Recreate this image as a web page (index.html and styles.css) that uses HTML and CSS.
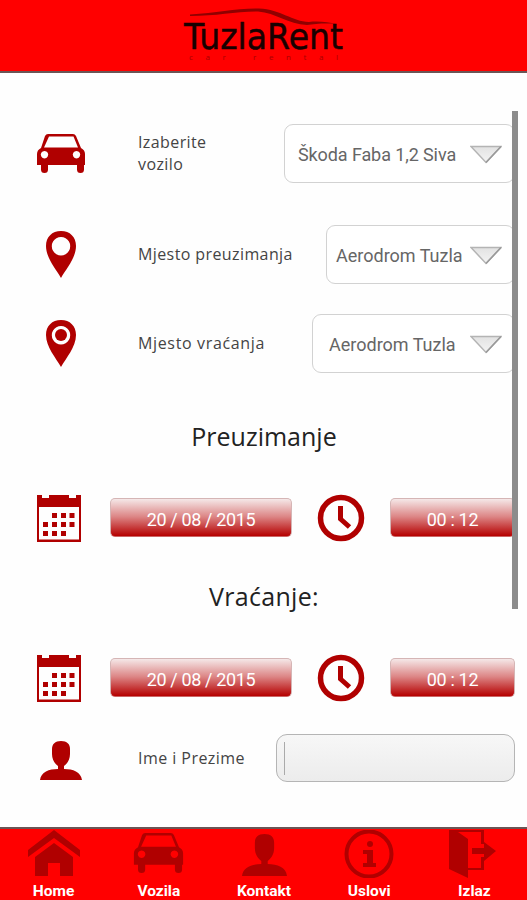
FILE: index.html
```html
<!DOCTYPE html>
<html lang="bs">
<head>
<meta charset="utf-8">
<title>TuzlaRent</title>
<link rel="stylesheet" href="styles.css">
</head>
<body>
<svg class="defs" width="0" height="0">
  <defs>
    <linearGradient id="arrow-fill" x1="0" y1="0" x2="0" y2="1"><stop offset="0" stop-color="#e2e2e2"/><stop offset="1" stop-color="#f4f4f4"/></linearGradient>
    <symbol id="car" viewBox="0 0 48 40">
      <path fill-rule="evenodd" d="M11 0h25q2 0 3 2l5 12q4 2 4 6v11h-1v4.500q0 3.500-3.500 3.500t-3.500-3.500V31H11v4.500q0 3.500-3.500 3.500T4 35.500V31H0V20q0-4 4-6L8 2q1-2 3-2zm1 2.500L7 13.500h34l-4.500-11zM7.500 17a3.700 3.700 0 1 0 .01 0zm32 0a3.700 3.700 0 1 0 .01 0z"/>
    </symbol>
    <symbol id="person" viewBox="0 0 42 39">
      <path d="M21 0c6 0 9 3 9 8v5c0 6-3 10-6 12v3c9 0 17 3 18 11H0c1-8 9-11 18-11v-3c-3-2-6-6-6-12V8c0-5 3-8 9-8z"/>
    </symbol>
    <symbol id="calendar" viewBox="0 0 44 47">
      <path fill-rule="evenodd" d="M0 0h5v3h7V0h20v3h7V0h5v47H0zM2 12v32.500h40V12z"/>
      <path d="M15 18h5v5h-5zm9 0h5v5h-5zm8.500 0h5v5h-5zM6 27h5v5H6zm9 0h5v5h-5zm9 0h5v5h-5zm8.500 0h5v5h-5zM6 36h5v5H6zm9 0h5v5h-5zm9 0h5v5h-5z"/>
    </symbol>
    <symbol id="clock" viewBox="0 0 48 48">
      <circle cx="24" cy="24" r="20.500" fill="none" stroke="#b00000" stroke-width="5.500"/>
      <path d="M23.500 12v13l9 8" fill="none" stroke="#b00000" stroke-width="5"/>
    </symbol>
    <symbol id="arrow" viewBox="0 0 32 19">
      <path d="M1 1.500h30L16 17.500z" fill="url(#arrow-fill)" stroke="#b4b4b4" stroke-width="1.500"/>
      <path d="M31 1.500L16 17.500" stroke="#999" stroke-width="1.500"/>
    </symbol>
  </defs>
</svg>
<header class="header">
  <svg class="logo" viewBox="0 0 170 60">
    <path d="M11 9.500C38 8 57 3 80 3.500c22 1 33 13 50 13.500 9-1 20 0 27 2-11-1-21 0-29 1-19-1-31-12-49-13.500C57 6.500 38 11 11 11z" fill="#900000"/>
    <text class="logo-name" x="5" y="44" textLength="159" lengthAdjust="spacingAndGlyphs">TuzlaRent</text>
    <text class="logo-sub" x="10" y="54.500" textLength="149">car rental</text>
  </svg>
</header>
<main class="form">
  <div class="row row-car">
    <span class="icon"><svg width="48" height="40"><use href="#car"/></svg></span>
    <span class="label label-car">Izaberite<br>vozilo</span>
    <div class="select select-car"><span class="value">Škoda Faba 1,2 Siva</span><svg width="32" height="19"><use href="#arrow"/></svg></div>
  </div>
  <div class="row row-pickup">
    <span class="icon"><svg width="30" height="47" viewBox="0 0 30 47"><path fill-rule="evenodd" d="M15 0c9 0 15 6 15 15 0 12-10 23-15 32C10 38 0 27 0 15 0 6 6 0 15 0zm0 6a9.200 9.200 0 1 0 .01 0z"/></svg></span>
    <span class="label label-pickup">Mjesto preuzimanja</span>
    <div class="select select-pickup"><span class="value">Aerodrom Tuzla</span><svg width="32" height="19"><use href="#arrow"/></svg></div>
  </div>
  <div class="row row-return">
    <span class="icon"><svg width="30" height="47" viewBox="0 0 30 47"><path fill-rule="evenodd" d="M15 0c9 0 15 6 15 15 0 12-10 23-15 32C10 38 0 27 0 15 0 6 6 0 15 0zm0 6a9.200 9.200 0 1 0 .01 0z"/><circle cx="15" cy="15" r="6"/></svg></span>
    <span class="label label-return">Mjesto vraćanja</span>
    <div class="select select-return"><span class="value">Aerodrom Tuzla</span><svg width="32" height="19"><use href="#arrow"/></svg></div>
  </div>
  <h2 class="heading heading-pickup">Preuzimanje</h2>
  <div class="row row-time">
    <span class="icon"><svg width="44" height="47"><use href="#calendar"/></svg></span>
    <div class="button date">20 / 08 / 2015</div>
    <svg class="clock" width="48" height="48"><use href="#clock"/></svg>
    <div class="button time">00 : 12</div>
  </div>
  <h2 class="heading heading-return">Vraćanje:</h2>
  <div class="row row-time">
    <span class="icon"><svg width="44" height="47"><use href="#calendar"/></svg></span>
    <div class="button date">20 / 08 / 2015</div>
    <svg class="clock" width="48" height="48"><use href="#clock"/></svg>
    <div class="button time">00 : 12</div>
  </div>
  <div class="row row-name">
    <span class="icon icon-person"><svg width="42" height="39"><use href="#person"/></svg></span>
    <span class="label label-name">Ime i Prezime</span>
    <div class="input"><i class="caret"></i></div>
  </div>
  <div class="scrollbar"></div>
</main>
<nav class="tabs">
  <a class="tab"><svg width="52" height="48" viewBox="0 0 52 48"><path d="M26 0l26 20v7L26 8 0 27v-7zM26 13l19 14v19H32V33H20v13H7V27z"/></svg><span>Home</span></a>
  <a class="tab"><svg width="52" height="48" viewBox="0 -3 52 48"><use href="#car" width="51" height="41"/></svg><span>Vozila</span></a>
  <a class="tab"><svg width="52" height="48" viewBox="0 0 52 48"><use href="#person" x="4" y="4" width="45" height="42"/></svg><span>Kontakt</span></a>
  <a class="tab"><svg width="52" height="48" viewBox="0 0 52 48"><circle cx="26" cy="24" r="22.500" fill="none" stroke="#b00000" stroke-width="4"/><circle cx="27" cy="14" r="3"/><path d="M20 20h10v13h3v4H20v-4h4v-9h-4z"/></svg><span>Uslovi</span></a>
  <a class="tab"><svg width="52" height="48" viewBox="0 0 52 48"><path fill-rule="evenodd" d="M1 0h35v14h-3V2H10l10 7v29h13V27h3v13H20v8L1 39zM24 18h12v-6l12 9-12 10v-7H24z"/></svg><span>Izlaz</span></a>
</nav>
</body>
</html>
```
FILE: styles.css
```css
* { box-sizing: border-box; }
body { margin: 0; width: 527px; height: 900px; overflow: hidden; display: flex; flex-direction: column; background: #fefefe; font-family: Roboto, "Liberation Sans", sans-serif; }
.defs { position: absolute; }
svg { fill: #b00000; display: block; flex: none; }
.header { height: 73px; flex: none; background: #f00; border-bottom: 2px solid #6b5555; display: flex; justify-content: center; padding-top: 5px; }
.logo { width: 170px; height: 60px; margin-left: 1px; }
.logo-name { font: 36px "DejaVu Sans", sans-serif; fill: #180000; stroke: #180000; stroke-width: .5px; }
.logo-sub { font: 8px "Open Sans", sans-serif; fill: #a80000; }
.form { position: relative; height: 754px; flex: none; padding: 51px 12px 0 37px; }
.row { display: flex; align-items: center; }
.icon { width: 48px; flex: none; display: flex; justify-content: center; }
.label { margin-left: 53px; padding-bottom: 2px; font-family: "Open Sans", sans-serif; font-size: 16px; line-height: 22px; color: #444; white-space: nowrap; }
.label-car { letter-spacing: .4px; }
.label-pickup { letter-spacing: .4px; }
.label-return { letter-spacing: .65px; }
.label-name { letter-spacing: .45px; padding-bottom: 0; }
.select { height: 59px; margin-left: auto; border: 1.5px solid #d2d2d2; border-radius: 9px; background: #fff; display: flex; align-items: center; justify-content: space-between; padding: 2px 12px 0 0; color: #666; font-size: 18px; letter-spacing: -.1px; white-space: nowrap; }
.row-car { height: 59px; }
.row-pickup { height: 59px; margin-top: 42px; }
.row-return { height: 59px; margin-top: 30px; }
.select-car { width: 231px; padding-left: 13px; }
.select-pickup { width: 189px; padding-left: 9px; letter-spacing: 0; }
.select-return { width: 203px; padding-left: 16px; letter-spacing: 0; }
.heading { height: 40px; font: 400 25px/40px "Open Sans", sans-serif; color: #222; margin: 43px 0 0 -24px; text-align: center; }
.heading-return { margin-top: 34px; letter-spacing: .3px; }
.row-time { height: 49px; margin-top: 37px; }
.row-time .icon { width: 44px; padding-top: 1px; }
.button { height: 39px; border: 1px solid #d5b5b5; border-bottom-color: #c66; border-radius: 5px; background: linear-gradient(#f5e8e8, #dc8585 48%, #b50000); color: #fff; font-size: 18px; letter-spacing: -.35px; display: flex; align-items: center; justify-content: center; padding-top: 3px; white-space: nowrap; }
.date { width: 182px; margin-left: 29px; }
.clock { margin-left: 25px; }
.time { width: 125px; margin-left: 25px; }
.row-name { height: 48px; margin-top: 32px; }
.icon-person { padding-top: 4px; }
.input { width: 239px; height: 48px; margin-left: auto; border: 1.5px solid #b5b5b5; border-radius: 11px; background: linear-gradient(#f7f7f7, #ececec); display: flex; align-items: center; padding-left: 7px; }
.caret { width: 1px; height: 33px; background: #aaa; }
.scrollbar { position: absolute; left: 512px; top: 38px; width: 6px; height: 498px; background: #8c8c8c; }
.tabs { height: 73px; flex: none; background: #f00; border-top: 2px solid #6b5555; display: grid; grid-template-columns: repeat(5, 1fr); padding-left: 1px; }
.tab { display: flex; flex-direction: column; align-items: center; color: #fff; font-weight: 700; font-size: 15.500px; line-height: 20px; padding-top: 1px; }
.tab span { margin-top: 3px; }
```
